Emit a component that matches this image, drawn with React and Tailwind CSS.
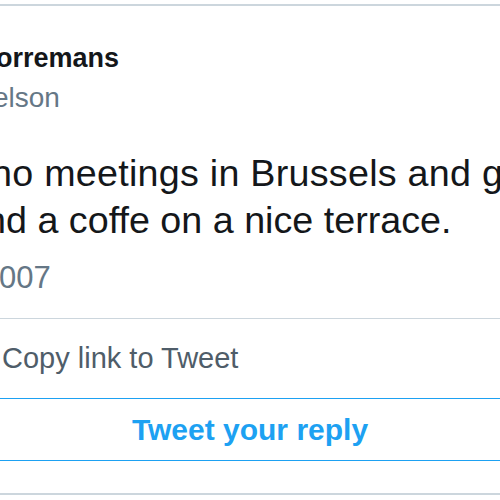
export default function App() {
  return (
    <div
      className="w-[500px] h-[500px] overflow-hidden bg-white"
      style={{ fontFamily: '"Liberation Sans", Arial, sans-serif' }}
    >
      <div className="pt-[4px]">
        {/* tweet header */}
        <div className="border-t-2 border-[#ccd6dd]">
          <div className="mt-[36px] -ml-[4px] whitespace-nowrap text-[27px] leading-[32px] font-bold text-[#14171a]">
            orremans
          </div>
          <div className="mt-[8px] -ml-[7px] whitespace-nowrap text-[28px] leading-[32px] text-[#657786]">
            elson
          </div>
        </div>

        {/* tweet body */}
        <div className="mt-[36px] text-[37.7px] leading-[47px] text-[#14171a] whitespace-nowrap">
          <div className="-ml-[9px] tracking-[0.25px]">no meetings in Brussels and going</div>
          <div className="-ml-[15px]">nd a coffe on a nice terrace.</div>
        </div>

        <div className="mt-[16px] -ml-[1px] text-[31px] leading-[36px] text-[#657786]">007</div>

        {/* actions */}
        <div className="mt-[22px] border-t-[1.5px] border-[#ccd6dd]">
          <div className="mt-[21px] ml-[2px] text-[29px] leading-[36px] text-[#4f5d69]">Copy link to Tweet</div>
        </div>

        <div className="mt-[22px] h-[63px] border-y-[1.5px] border-[#1da1f2] flex items-center justify-center">
          <span className="text-[30px] leading-[36px] font-bold text-[#1da1f2]">Tweet your reply</span>
        </div>

        <div className="mt-[32px] border-t-2 border-[#ccd6dd]" />
      </div>
    </div>
  )
}
